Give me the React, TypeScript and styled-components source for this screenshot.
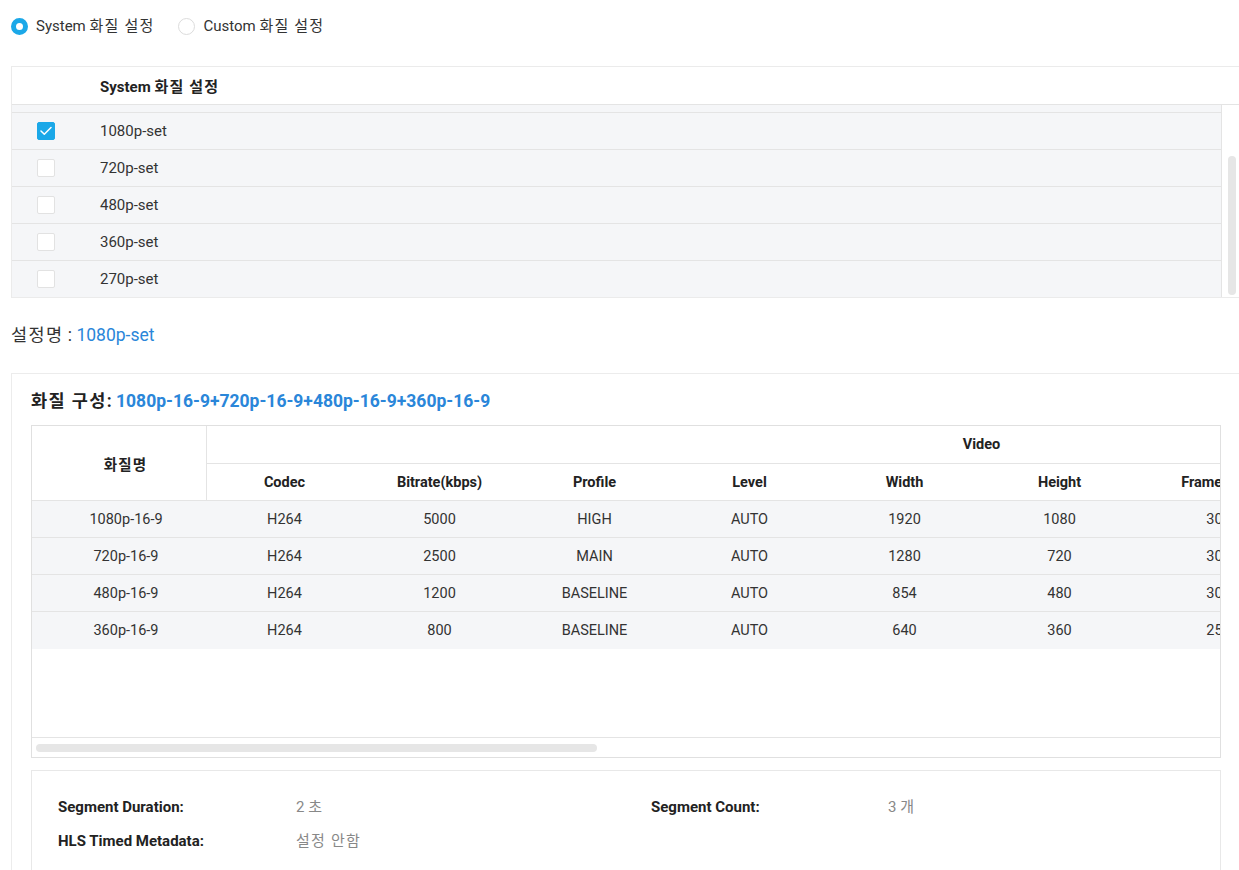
import React, { useLayoutEffect, useRef } from 'react';
import styled, { createGlobalStyle } from 'styled-components';

const Global = createGlobalStyle`
  html, body { margin: 0; padding: 0; background: #fff; overflow: hidden; }
  body { font-family: Roboto, "Noto Sans CJK KR", sans-serif; color: #333; }
  * { box-sizing: border-box; }
`;

const Page = styled.div`
  width: 1241px;
  padding: 17px 0 40px 11px;
`;

const Ko = styled.span`
  letter-spacing: 0.08em;
`;

const RadioGroup = styled.div`
  display: flex;
  align-items: center;
  gap: 24px;
  height: 18px;
`;

const RadioItem = styled.label`
  display: flex;
  align-items: center;
  gap: 8px;
  font-size: 15px;
  color: #333;
  line-height: 18px;
`;

const RadioCircle = styled.span<{ $on?: boolean }>`
  width: 17px;
  height: 17px;
  flex: none;
  border-radius: 50%;
  background: #fff;
  border: ${p => (p.$on ? '5px solid #1ba8e8' : '1px solid #dcdcdc')};
`;

const SetBox = styled.div`
  margin-top: 31px;
  border: 1px solid #ebebeb;
  border-right: none;
`;

const SetHead = styled.div`
  display: flex;
  align-items: center;
  height: 38px;
  border-bottom: 1px solid #e4e4e4;
  font-size: 15px;
  font-weight: 700;
  color: #222;
`;

const SetBody = styled.div`
  display: flex;
  height: 192px;
`;

const SetViewport = styled.div`
  flex: 1;
  overflow: hidden;
`;

const VTrack = styled.div`
  width: 20px;
  flex: none;
  border-left: 1px solid #e4e4e4;
  padding: 2px 5px 2px 6px;
  background: #fff;
`;

const VThumb = styled.div`
  width: 8px;
  border-radius: 4px;
  background: #e6e6e6;
`;

const SetRow = styled.div`
  display: flex;
  align-items: center;
  height: 37px;
  border-top: 1px solid #e4e4e4;
  background: #f5f6f8;
  font-size: 15px;
  color: #333;
`;

const CheckCell = styled.div`
  width: 88px;
  flex: none;
  padding-left: 25px;
  display: flex;
  align-items: center;
`;

const Check = styled.span<{ $on?: boolean }>`
  width: 18px;
  height: 18px;
  border-radius: 2px;
  display: flex;
  align-items: center;
  justify-content: center;
  background: ${p => (p.$on ? '#1ba8e8' : '#fff')};
  border: 1px solid ${p => (p.$on ? '#1ba8e8' : '#e2e2e2')};
`;

const NameLine = styled.div`
  margin-top: 25px;
  font-size: 17.5px;
  line-height: 24px;
  color: #333;
`;

const Blue = styled.span`
  color: #2a86d9;
`;

const Panel = styled.div`
  margin-top: 26px;
  border: 1px solid #ececec;
  padding: 15px 19px 30px 19px;
`;

const PanelTitle = styled.div`
  font-size: 17.5px;
  font-weight: 700;
  line-height: 24px;
  color: #222;
`;

const TableWrap = styled.div`
  margin-top: 12px;
  border: 1px solid #e0e0e0;
`;

const TableViewport = styled.div`
  height: 311px;
  overflow: hidden;
`;

const HTrack = styled.div`
  height: 20px;
  border-top: 1px solid #e4e4e4;
  padding: 6px 4px 5px 4px;
  background: #fff;
`;

const HThumb = styled.div`
  height: 8px;
  border-radius: 4px;
  background: #e6e6e6;
`;

const QTable = styled.table`
  table-layout: fixed;
  width: 2500px;
  border-collapse: separate;
  border-spacing: 0;
  font-size: 14.5px;
`;

const HeadRow = styled.tr<{ $h: number }>`
  th { height: ${p => p.$h}px; }
`;

const Th = styled.th<{ $divider?: boolean; $first?: boolean }>`
  height: 37px;
  padding: 0 0 0 ${p => (p.$first ? '13px' : '0')};
  font-weight: 700;
  color: #222;
  text-align: center;
  background: #fff;
  border-bottom: 1px solid #e4e4e4;
  border-right: ${p => (p.$divider ? '1px solid #e4e4e4' : 'none')};
  white-space: nowrap;
`;

const Td = styled.td<{ $last?: boolean; $first?: boolean }>`
  height: 37px;
  padding: 0 0 0 ${p => (p.$first ? '13px' : '0')};
  text-align: center;
  color: #333;
  background: #f5f6f8;
  border-bottom: ${p => (p.$last ? 'none' : '1px solid #e4e4e4')};
  white-space: nowrap;
`;

const InfoBox = styled.div`
  margin-top: 12px;
  border: 1px solid #e8e8e8;
  padding: 26px 27px 24px 26px;
  display: grid;
  grid-template-columns: 238px 355px 237px 1fr;
  row-gap: 14px;
  font-size: 15px;
  line-height: 20px;
`;

const InfoLabel = styled.div`
  font-weight: 700;
  color: #222;
`;

const InfoValue = styled.div`
  color: #888;
`;

const sets = ['2160p-set', '1440p-set', '1080p-set', '720p-set', '480p-set', '360p-set', '270p-set'];

const videoCols = ['Codec', 'Bitrate(kbps)', 'Profile', 'Level', 'Width', 'Height', 'Framerate', 'GOP', 'B-Frames', 'Ref Frames'];
const audioCols = ['Codec', 'Bitrate(kbps)', 'Sample Rate', 'Channels', 'Profile'];

const rows = [
  ['1080p-16-9', 'H264', '5000', 'HIGH', 'AUTO', '1920', '1080', '30', '60', '2', '3', 'AAC', '128', '48000', '2', 'LC'],
  ['720p-16-9', 'H264', '2500', 'MAIN', 'AUTO', '1280', '720', '30', '60', '2', '3', 'AAC', '128', '48000', '2', 'LC'],
  ['480p-16-9', 'H264', '1200', 'BASELINE', 'AUTO', '854', '480', '30', '60', '0', '1', 'AAC', '96', '48000', '2', 'LC'],
  ['360p-16-9', 'H264', '800', 'BASELINE', 'AUTO', '640', '360', '25', '50', '0', '1', 'AAC', '64', '44100', '2', 'LC'],
];

const ROW_H = 37;
const SET_VIEW = 192;
const SET_CONTENT = sets.length * ROW_H;
const SET_TRACK = SET_VIEW - 4;
const SET_SCROLL = SET_CONTENT - SET_VIEW;
const vThumbH = Math.round((SET_TRACK * SET_VIEW) / SET_CONTENT);
const vThumbTop = Math.round((SET_TRACK * SET_SCROLL) / SET_CONTENT);

const TABLE_VIEW = 1188;
const TABLE_CONTENT = 2500;
const H_TRACK = TABLE_VIEW - 8;
const hThumbW = Math.round((H_TRACK * TABLE_VIEW) / TABLE_CONTENT);

const CheckIcon = () => (
  <svg width="12" height="10" viewBox="0 0 12 10" fill="none">
    <polyline points="1,5 4.3,8.2 11,1.5" stroke="#fff" strokeWidth="1.5" strokeLinecap="round" strokeLinejoin="round" />
  </svg>
);

export default function App() {
  const viewRef = useRef<HTMLDivElement>(null);
  useLayoutEffect(() => {
    if (viewRef.current) viewRef.current.scrollTop = viewRef.current.scrollHeight;
  }, []);

  return (
    <>
      <Global />
      <Page>
        <RadioGroup>
          <RadioItem>
            <RadioCircle $on />
            <span>System <Ko>화질 설정</Ko></span>
          </RadioItem>
          <RadioItem>
            <RadioCircle />
            <span>Custom <Ko>화질 설정</Ko></span>
          </RadioItem>
        </RadioGroup>

        <SetBox>
          <SetHead>
            <CheckCell />
            <span>System <Ko>화질 설정</Ko></span>
          </SetHead>
          <SetBody>
            <SetViewport ref={viewRef}>
              {sets.map(s => (
                <SetRow key={s}>
                  <CheckCell>
                    <Check $on={s === '1080p-set'}>{s === '1080p-set' && <CheckIcon />}</Check>
                  </CheckCell>
                  {s}
                </SetRow>
              ))}
            </SetViewport>
            <VTrack>
              <VThumb style={{ height: vThumbH, marginTop: vThumbTop }} />
            </VTrack>
          </SetBody>
        </SetBox>

        <NameLine>
          <Ko>설정명</Ko> : <Blue>1080p-set</Blue>
        </NameLine>

        <Panel>
          <PanelTitle>
            <Ko>화질 구성</Ko>: <Blue>1080p-16-9+720p-16-9+480p-16-9+360p-16-9</Blue>
          </PanelTitle>
          <TableWrap>
            <TableViewport>
              <QTable>
                <colgroup>
                  <col style={{ width: 175 }} />
                  {[...videoCols, ...audioCols].map((c, i) => (
                    <col key={i} style={{ width: 155 }} />
                  ))}
                </colgroup>
                <thead>
                  <HeadRow $h={38}>
                    <Th rowSpan={2} $divider $first><Ko>화질명</Ko></Th>
                    <Th colSpan={videoCols.length} $divider>Video</Th>
                    <Th colSpan={audioCols.length}>Audio</Th>
                  </HeadRow>
                  <HeadRow $h={37}>
                    {videoCols.map((c, i) => (
                      <Th key={'v' + i} $divider={i === videoCols.length - 1}>{c}</Th>
                    ))}
                    {audioCols.map((c, i) => (
                      <Th key={'a' + i}>{c}</Th>
                    ))}
                  </HeadRow>
                </thead>
                <tbody>
                  {rows.map((r, ri) => (
                    <tr key={ri}>
                      {r.map((v, ci) => (
                        <Td key={ci} $first={ci === 0} $last={ri === rows.length - 1}>{v}</Td>
                      ))}
                    </tr>
                  ))}
                </tbody>
              </QTable>
            </TableViewport>
            <HTrack>
              <HThumb style={{ width: hThumbW }} />
            </HTrack>
          </TableWrap>

          <InfoBox>
            <InfoLabel>Segment Duration:</InfoLabel>
            <InfoValue>2 <Ko>초</Ko></InfoValue>
            <InfoLabel>Segment Count:</InfoLabel>
            <InfoValue>3 <Ko>개</Ko></InfoValue>
            <InfoLabel>HLS Timed Metadata:</InfoLabel>
            <InfoValue><Ko>설정 안함</Ko></InfoValue>
          </InfoBox>
        </Panel>
      </Page>
    </>
  );
}
